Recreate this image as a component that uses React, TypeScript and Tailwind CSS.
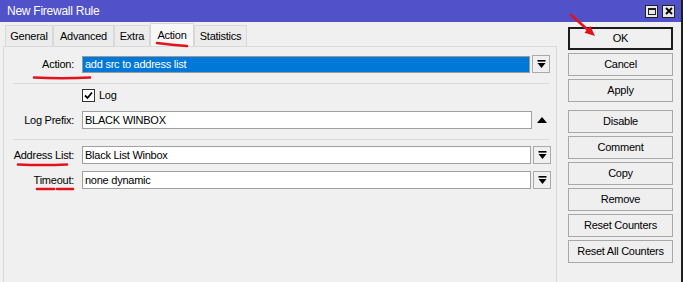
import React from "react";

const tabs = [
  { name: "General", w: "w-[48px]" },
  { name: "Advanced", w: "w-[61px]" },
  { name: "Extra", w: "w-[36px]" },
  { name: "Action", w: "w-[44px]", active: true },
  { name: "Statistics", w: "w-[53px]" },
];

function DropIcon() {
  return (
    <svg width="9" height="9" viewBox="0 0 9 9">
      <rect x="0.5" y="0" width="8" height="1.6" fill="#000" />
      <polygon points="0.5,3 8.5,3 4.5,8" fill="#000" />
    </svg>
  );
}

function DropButton() {
  return (
    <div className="ml-[2px] w-[18px] h-[18px] border border-[#a9a9a9] bg-[#f0f0f0] flex items-center justify-center">
      <DropIcon />
    </div>
  );
}

function Field({
  label,
  value,
  selected,
  width = "w-[448px]",
  children,
}: {
  label: string;
  value: string;
  selected?: boolean;
  width?: string;
  children?: React.ReactNode;
}) {
  return (
    <div className="flex items-center h-[18px]">
      <div className="w-[71px] text-right pr-[1px]">{label}</div>
      <div
        className={
          selected
            ? `ml-[7px] ${width} h-[17px] border border-[#9a9a9a] bg-[#0078d7] text-white pl-[2px] flex items-center`
            : `ml-[7px] ${width} h-[18px] border border-[#a0a0a0] bg-white pl-[2px] flex items-center`
        }
      >
        {value}
      </div>
      {children}
    </div>
  );
}

function Btn({ label, primary }: { label: string; primary?: boolean }) {
  return (
    <div
      className={
        primary
          ? "h-[23px] w-[105px] border-2 border-[#1c1c1c] bg-[#f0f0f0] flex items-center justify-center"
          : "h-[23px] w-[105px] border border-[#a8a8a8] bg-[#efefef] flex items-center justify-center"
      }
    >
      {label}
    </div>
  );
}

export default function App() {
  return (
    <div className="relative w-[683px] h-[282px] overflow-hidden bg-[#f0f0f0] border-r-2 border-[#1e1e1e] font-['Liberation_Sans',Arial,sans-serif] text-[11px] tracking-[-0.25px] text-black">
      {/* title bar */}
      <div className="h-[22px] bg-[#5151c9] flex items-center pl-[7px] pr-[6px]">
        <span className="text-white text-[12px]">New Firewall Rule</span>
        <div className="ml-auto flex gap-[4px]">
          <div className="w-[13px] h-[13px] border border-[#202020] bg-[#e9e9e9] flex items-center justify-center">
            <div className="w-[8px] h-[7px] border border-[#202020] border-t-2" />
          </div>
          <div className="w-[13px] h-[13px] border border-[#202020] bg-[#e9e9e9] flex items-center justify-center">
            <svg width="8" height="8" viewBox="0 0 8 8">
              <path d="M1 1 L7 7 M7 1 L1 7" stroke="#000" strokeWidth="1.8" />
            </svg>
          </div>
        </div>
      </div>

      <div className="flex">
        {/* left side: tabs + panel */}
        <div className="w-[557px] pl-[3px]">
          <div className="flex items-end h-[24px] pl-[2px]">
            {tabs.map((t) => (
              <div
                key={t.name}
                className={
                  t.active
                    ? `${t.w} h-[23px] border border-b-0 border-[#d6d6d6] bg-[#f7f7f7] flex items-center justify-center`
                    : `${t.w} h-[21px] border border-b-0 border-[#d9d9d9] bg-[#ececec] flex items-center justify-center`
                }
              >
                {t.name}
              </div>
            ))}
          </div>

          <div className="h-[236px] border-t border-r border-l border-[#d9d9d9] pt-[8px]">
            <Field label="Action:" value="add src to address list" selected>
              <DropButton />
            </Field>

            <div className="mt-[10px] ml-[9px] w-[536px] h-px bg-[#dadada]" />

            <div className="mt-[5px] ml-[78px] flex items-center h-[13px]">
              <div className="w-[13px] h-[13px] border border-[#333] bg-white flex items-center justify-center">
                <svg width="9" height="9" viewBox="0 0 9 9">
                  <path d="M1 4.5 L3.5 7 L8 1.5" stroke="#000" strokeWidth="1.8" fill="none" />
                </svg>
              </div>
              <span className="ml-[4px]">Log</span>
            </div>

            <div className="mt-[9px]">
              <Field label="Log Prefix:" value="BLACK WINBOX" width="w-[450px]">
                <div className="ml-[5px] w-[10px] flex justify-center">
                  <svg width="10" height="6" viewBox="0 0 10 6">
                    <polygon points="0,6 10,6 5,0" fill="#000" />
                  </svg>
                </div>
              </Field>
            </div>

            <div className="mt-[10px] ml-[9px] w-[536px] h-px bg-[#dadada]" />

            <div className="mt-[6px]">
              <Field label="Address List:" value="Black List Winbox" width="w-[449px]">
                <DropButton />
              </Field>
            </div>

            <div className="mt-[7px]">
              <Field label="Timeout:" value="none dynamic" width="w-[449px]">
                <DropButton />
              </Field>
            </div>
          </div>
        </div>

        {/* right side: buttons */}
        <div className="ml-[11px] mt-[5px] flex flex-col gap-[3px]">
          <Btn label="OK" primary />
          <Btn label="Cancel" />
          <Btn label="Apply" />
          <div className="mt-[5px] flex flex-col gap-[3px]">
            <Btn label="Disable" />
            <Btn label="Comment" />
            <Btn label="Copy" />
            <Btn label="Remove" />
            <Btn label="Reset Counters" />
            <Btn label="Reset All Counters" />
          </div>
        </div>
      </div>

      {/* red annotations */}
      <svg
        className="absolute inset-0 pointer-events-none"
        width="683"
        height="282"
        viewBox="0 0 683 282"
      >
        <g stroke="#e3131b" strokeWidth="2.6" strokeLinecap="round" fill="none">
          <path d="M157 43 Q172 45 187 46" />
          <path d="M34 77.5 Q62 79 90 77.5" />
          <path d="M18 164.5 Q43 165.5 67 164.5" />
          <path d="M37 189 L54 189" />
          <path d="M57 189 L73 189" />
          <path d="M571 15 L588 30" />
        </g>
        <polygon points="595,36 584.5,32.8 590.4,26" fill="#e3131b" />
      </svg>
    </div>
  );
}
